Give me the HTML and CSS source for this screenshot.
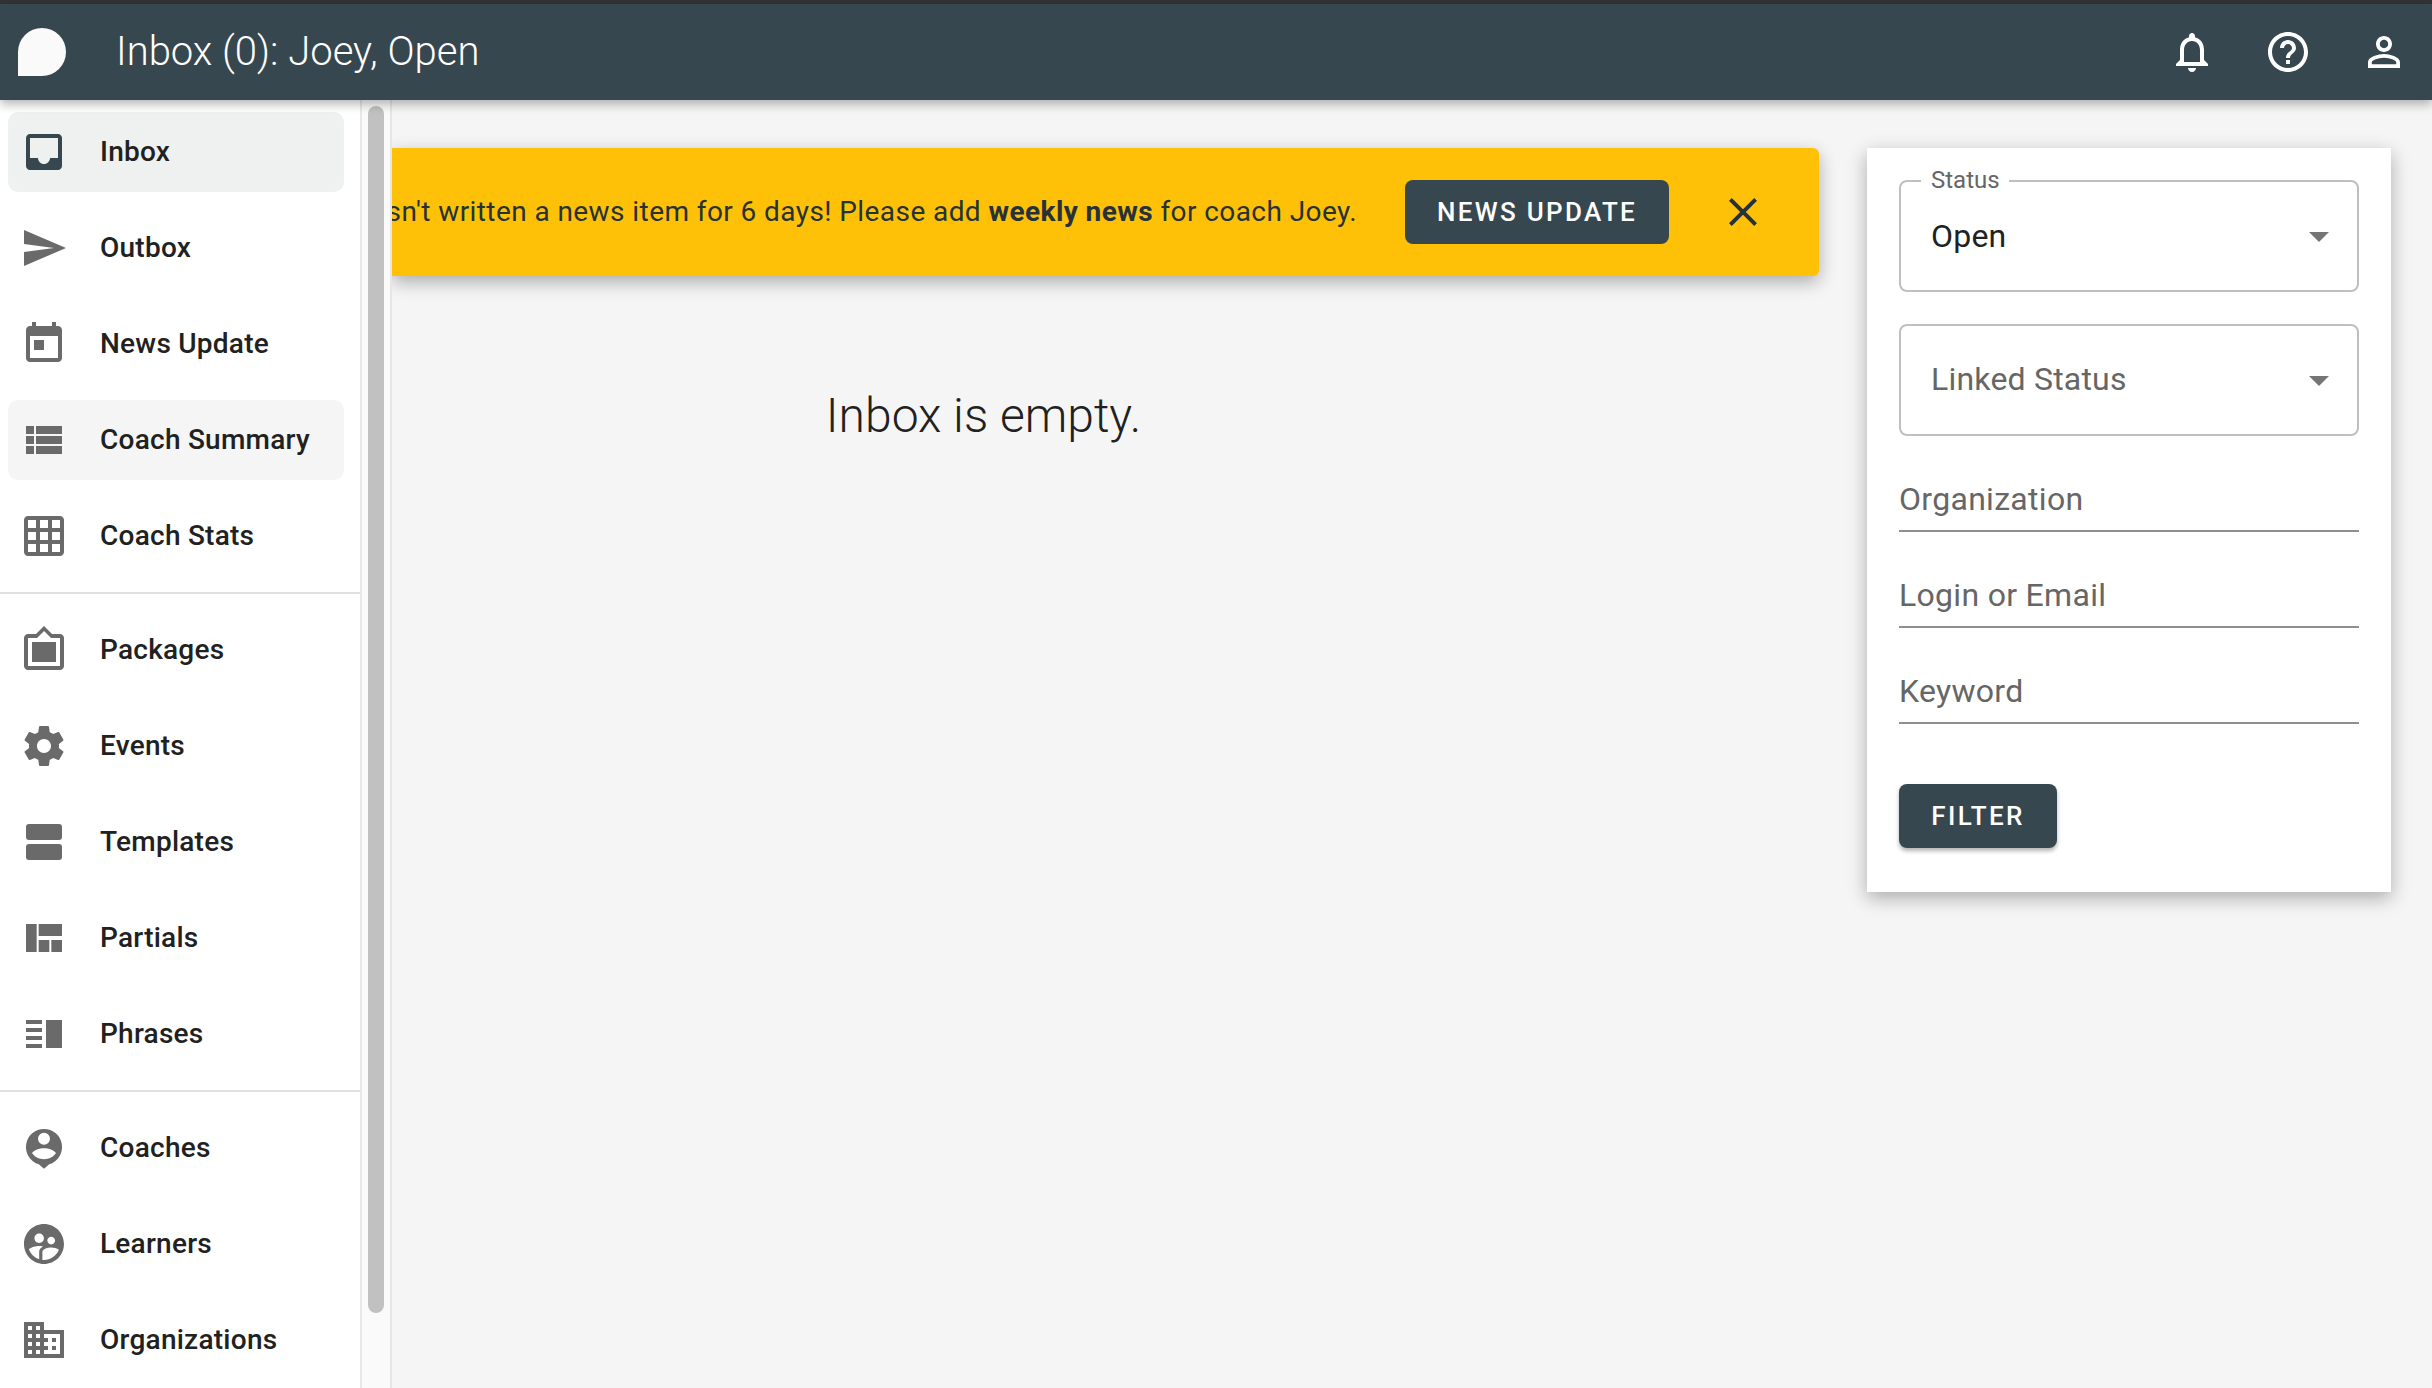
FILE: index.html
```html
<!DOCTYPE html>
<html lang="en">
<head>
<meta charset="utf-8">
<title>Inbox</title>
<link rel="stylesheet" href="styles.css">
</head>
<body>
<div class="strip"></div>
<header class="toolbar">
  <svg class="logo" viewBox="0 0 48 48"><path d="M0 48V24a24 24 0 1 1 24 24z"/></svg>
  <h1 class="title">Inbox (0): Joey, Open</h1>
  <div class="toolbar-actions">
    <svg class="icon" viewBox="0 0 24 24"><path d="M12 22c1.1 0 2-.9 2-2h-4c0 1.1.9 2 2 2zm6-6v-5c0-3.07-1.63-5.64-4.5-6.32V4c0-.83-.67-1.5-1.5-1.5s-1.5.67-1.5 1.5v.68C7.64 5.36 6 7.92 6 11v5l-2 2v1h16v-1l-2-2zm-2 1H8v-6c0-2.48 1.51-4.5 4-4.5s4 2.02 4 4.5v6z"/></svg>
    <svg class="icon" viewBox="0 0 24 24"><path d="M11 18h2v-2h-2v2zm1-16C6.48 2 2 6.48 2 12s4.48 10 10 10 10-4.48 10-10S17.52 2 12 2zm0 18c-4.41 0-8-3.59-8-8s3.59-8 8-8 8 3.59 8 8-3.59 8-8 8zm0-14c-2.21 0-4 1.79-4 4h2c0-1.1.9-2 2-2s2 .9 2 2c0 2-3 1.75-3 5h2c0-2.25 3-2.5 3-5 0-2.21-1.79-4-4-4z"/></svg>
    <svg class="icon" viewBox="0 0 24 24"><path d="M12 5.9c1.16 0 2.1.94 2.1 2.1s-.94 2.1-2.1 2.1S9.9 9.16 9.9 8s.94-2.1 2.1-2.1m0 9c2.97 0 6.1 1.46 6.1 2.1v1.1H5.9V17c0-.64 3.13-2.1 6.1-2.1M12 4C9.79 4 8 5.79 8 8s1.79 4 4 4 4-1.79 4-4-1.79-4-4-4zm0 9c-2.67 0-8 1.34-8 4v3h16v-3c0-2.66-5.33-4-8-4z"/></svg>
  </div>
</header>
<div class="layout">
  <aside class="drawer">
    <nav class="nav">
      <div class="nav-section">
        <a class="nav-item is-active"><svg class="icon" viewBox="0 0 24 24"><path d="M19 3H4.99c-1.11 0-1.98.89-1.98 2L3 19c0 1.1.88 2 1.99 2H19c1.1 0 2-.9 2-2V5c0-1.11-.9-2-2-2zm0 12h-4c0 1.66-1.35 3-3 3s-3-1.34-3-3H4.99V5H19v10z"/></svg><span>Inbox</span></a>
        <a class="nav-item"><svg class="icon" viewBox="0 0 24 24"><path d="M2.01 21L23 12 2.01 3 2 10l15 2-15 2z"/></svg><span>Outbox</span></a>
        <a class="nav-item"><svg class="icon" viewBox="0 0 24 24"><path d="M19 3h-1V1h-2v2H8V1H6v2H5c-1.11 0-1.99.9-1.99 2L3 19c0 1.1.89 2 2 2h14c1.1 0 2-.9 2-2V5c0-1.1-.9-2-2-2zm0 16H5V8h14v11zM7 10h5v5H7z"/></svg><span>News Update</span></a>
        <a class="nav-item is-hover"><svg class="icon" viewBox="0 0 24 24"><path d="M3 14h4v-4H3v4zm0 5h4v-4H3v4zM3 9h4V5H3v4zm5 5h13v-4H8v4zm0 5h13v-4H8v4zM8 5v4h13V5H8z"/></svg><span>Coach Summary</span></a>
        <a class="nav-item"><svg class="icon" viewBox="0 0 24 24"><path d="M20 2H4c-1.1 0-2 .9-2 2v16c0 1.1.9 2 2 2h16c1.1 0 2-.9 2-2V4c0-1.1-.9-2-2-2zM8 20H4v-4h4v4zm0-6H4v-4h4v4zm0-6H4V4h4v4zm6 12h-4v-4h4v4zm0-6h-4v-4h4v4zm0-6h-4V4h4v4zm6 12h-4v-4h4v4zm0-6h-4v-4h4v4zm0-6h-4V4h4v4z"/></svg><span>Coach Stats</span></a>
      </div>
      <div class="nav-section">
        <a class="nav-item"><svg class="icon" viewBox="0 0 24 24"><path d="M20 4h-4l-4-4-4 4H4c-1.1 0-2 .9-2 2v14c0 1.1.9 2 2 2h16c1.1 0 2-.9 2-2V6c0-1.1-.9-2-2-2zm0 16H4V6h4.52l3.52-3.5L15.52 6H20v14zM18 8H6v10h12z"/></svg><span>Packages</span></a>
        <a class="nav-item"><svg class="icon" viewBox="0 0 24 24"><path d="M19.43 12.98c.04-.32.07-.64.07-.98s-.03-.66-.07-.98l2.11-1.65c.19-.15.24-.42.12-.64l-2-3.46c-.12-.22-.39-.3-.61-.22l-2.49 1c-.52-.4-1.08-.73-1.69-.98l-.38-2.65C14.46 2.18 14.25 2 14 2h-4c-.25 0-.46.18-.49.42l-.38 2.65c-.61.25-1.17.59-1.69.98l-2.49-1c-.23-.09-.49 0-.61.22l-2 3.46c-.13.22-.07.49.12.64l2.11 1.65c-.04.32-.07.65-.07.98s.03.66.07.98l-2.11 1.65c-.19.15-.24.42-.12.64l2 3.46c.12.22.39.3.61.22l2.49-1c.52.4 1.08.73 1.69.98l.38 2.65c.03.24.24.42.49.42h4c.25 0 .46-.18.49-.42l.38-2.65c.61-.25 1.17-.59 1.69-.98l2.49 1c.23.09.49 0 .61-.22l2-3.46c.12-.22.07-.49-.12-.64l-2.11-1.65zM12 15.5c-1.93 0-3.5-1.57-3.5-3.5s1.57-3.5 3.5-3.5 3.5 1.57 3.5 3.5-1.57 3.5-3.5 3.5z"/></svg><span>Events</span></a>
        <a class="nav-item"><svg class="icon" viewBox="0 0 24 24"><path d="M4.5 3h15A1.5 1.5 0 0 1 21 4.5v5a1.5 1.5 0 0 1-1.5 1.5h-15A1.5 1.5 0 0 1 3 9.500v-5A1.500 1.500 0 0 1 4.500 3zm0 10h15a1.500 1.500 0 0 1 1.500 1.500v5a1.500 1.500 0 0 1-1.500 1.500h-15A1.500 1.500 0 0 1 3 19.500v-5A1.500 1.500 0 0 1 4.500 13z"/></svg><span>Templates</span></a>
        <a class="nav-item"><svg class="icon" viewBox="0 0 24 24"><path d="M3 19h5.33V5H3v14zm6.33 0h5.33v-6H9.33v6zm6.34 0H21v-6h-5.33v6zM9.33 5v6H21V5H9.33z"/></svg><span>Partials</span></a>
        <a class="nav-item"><svg class="icon" viewBox="0 0 24 24"><path d="M3 15h8v-2H3v2zm0 4h8v-2H3v2zm0-8h8V9H3v2zm0-6v2h8V5H3zm10 0h8v14h-8V5z"/></svg><span>Phrases</span></a>
      </div>
      <div class="nav-section">
        <a class="nav-item"><svg class="icon" viewBox="0 0 24 24"><path fill-rule="evenodd" d="M12 2.500a9 9 0 0 0-2.600 17.620L12 22.400l2.600-2.280A9 9 0 0 0 12 2.500zm0 1.900a3 3 0 1 1 0 6 3 3 0 0 1 0-6zm0 7.700c2.400 0 4.900.9 6 2.400-1.200 1.900-3.500 3.100-6 3.100s-4.800-1.200-6-3.100c1.100-1.500 3.600-2.400 6-2.400z"/></svg><span>Coaches</span></a>
        <a class="nav-item"><svg class="icon" viewBox="0 0 24 24"><path d="M11.990 2c-5.520 0-10 4.480-10 10s4.480 10 10 10 10-4.480 10-10-4.480-10-10-10zm3.610 6.340c1.070 0 1.930.86 1.930 1.930 0 1.070-.86 1.930-1.930 1.930-1.070 0-1.930-.86-1.930-1.930-.01-1.070.86-1.930 1.930-1.930zm-6-1.580c1.300 0 2.360 1.060 2.360 2.360 0 1.300-1.060 2.360-2.360 2.360s-2.360-1.060-2.360-2.360c0-1.310 1.050-2.360 2.360-2.360zm0 9.130v3.750c-2.400-.75-4.300-2.600-5.140-4.960 1.050-1.120 3.670-1.690 5.140-1.690.53 0 1.200.08 1.900.22-1.640.87-1.900 2.020-1.900 2.680zM11.990 20c-.27 0-.53-.01-.79-.04v-4.070c0-1.420 2.940-2.130 4.400-2.130 1.070 0 2.920.39 3.840 1.150-1.170 2.970-4.060 5.090-7.450 5.090z"/></svg><span>Learners</span></a>
        <a class="nav-item"><svg class="icon" viewBox="0 0 24 24"><path d="M12 7V3H2v18h20V7H12zM6 19H4v-2h2v2zm0-4H4v-2h2v2zm0-4H4V9h2v2zm0-4H4V5h2v2zm4 12H8v-2h2v2zm0-4H8v-2h2v2zm0-4H8V9h2v2zm0-4H8V5h2v2zm10 12h-8v-2h2v-2h-2v-2h2v-2h-2V9h8v10zm-2-8h-2v2h2v-2zm0 4h-2v2h2v-2z"/></svg><span>Organizations</span></a>
      </div>
    </nav>
    <div class="scrollbar"><div class="scroll-thumb"></div></div>
  </aside>
  <main class="content">
    <div class="banner">
      <p class="banner-text">Joey hasn't written a news item for 6 days! Please add <strong>weekly news</strong> for coach Joey.</p>
      <button class="btn btn-news">NEWS UPDATE</button>
      <svg class="icon banner-close" viewBox="0 0 24 24"><path d="M19 6.41L17.59 5 12 10.59 6.41 5 5 6.41 10.59 12 5 17.59 6.41 19 12 13.41 17.59 19 19 17.59 13.41 12z"/></svg>
    </div>
    <p class="empty">Inbox is empty.</p>
  </main>
  <aside class="filters">
    <div class="select">
      <span class="select-label">Status</span>
      <span class="select-value">Open</span>
      <svg class="icon select-arrow" viewBox="0 0 24 24"><path d="M7 10l5 5 5-5z"/></svg>
    </div>
    <div class="select">
      <span class="select-value is-placeholder">Linked Status</span>
      <svg class="icon select-arrow" viewBox="0 0 24 24"><path d="M7 10l5 5 5-5z"/></svg>
    </div>
    <div class="field">Organization</div>
    <div class="field">Login or Email</div>
    <div class="field">Keyword</div>
    <button class="btn btn-filter">FILTER</button>
  </aside>
</div>
</body>
</html>
```

FILE: styles.css
```css
* { box-sizing: border-box; }
html, body { height: 100%; }
body {
  margin: 0;
  height: 100vh;
  overflow: hidden;
  display: flex;
  flex-direction: column;
  background: #f5f5f5;
  color: #212121;
  font-family: Roboto, "Liberation Sans", sans-serif;
}
.icon { width: 48px; height: 48px; flex: none; fill: currentColor; display: block; }

.strip { height: 4px; background: #333; flex: none; }
.toolbar {
  height: 96px;
  flex: none;
  display: flex;
  align-items: center;
  padding: 0 24px 0 18px;
  background: #37474f;
  color: #fff;
  position: relative;
  z-index: 3;
  box-shadow: 0 4px 10px rgba(0,0,0,.3);
}
.logo { width: 48px; height: 48px; fill: #fafafa; flex: none; }
.title {
  margin: 0 0 0 50px;
  font-size: 40px;
  font-weight: 300;
  line-height: 48px;
  flex: 1;
}
.toolbar-actions { display: flex; gap: 48px; }

.layout { flex: 1; display: flex; min-height: 0; }

.drawer {
  width: 392px;
  flex: none;
  display: flex;
  background: #fafafa;
  border-right: 2px solid #e6e6e6;
  position: relative;
  z-index: 2;
  overflow: hidden;
}
.nav {
  width: 362px;
  flex: none;
  background: #fff;
  border-right: 2px solid #e8e8e8;
  padding-top: 12px;
}
.nav-section { display: flex; flex-direction: column; gap: 16px; padding-bottom: 16px; border-bottom: 2px solid #e0e0e0; margin-bottom: 16px; }
.nav-section:last-child { border-bottom: 0; margin-bottom: 0; }
.nav-item {
  height: 80px;
  margin: 0 16px 0 8px;
  padding-left: 12px;
  display: flex;
  align-items: center;
  gap: 32px;
  border-radius: 10px;
  font-size: 28px;
  font-weight: 500;
  letter-spacing: .25px;
  color: #212121;
}
.nav-item span { margin-bottom: 2px; }
.nav-item .icon { color: #6a6a6a; }
.nav-item.is-active { background: #eff1f1; }
.nav-item.is-active .icon { color: #37474f; }
.nav-item.is-hover { background: #f5f5f5; }
.scrollbar { flex: 1; padding: 6px 6px 0; }
.scroll-thumb { width: 16px; height: 1207px; border-radius: 8px; background: #c1c1c1; }

.content { flex: 1; min-width: 0; display: flex; flex-direction: column; }
.banner {
  height: 128px;
  margin-top: 48px;
  padding-right: 52px;
  display: flex;
  align-items: center;
  justify-content: flex-end;
  overflow: hidden;
  background: #ffc107;
  color: #263238;
  border-radius: 0 6px 6px 0;
  box-shadow: 0 6px 18px rgba(0,0,0,.3);
}
.banner-text { margin: 0 48px 0 0; flex: none; white-space: nowrap; font-size: 28px; line-height: 40px; letter-spacing: .42px; }
.banner-text strong { font-weight: 700; }
.banner-close { margin-left: 50px; }

.btn {
  height: 64px;
  flex: none;
  border: 0;
  border-radius: 8px;
  padding: 0;
  background: #37474f;
  color: #fff;
  font-family: inherit;
  font-size: 26px;
  font-weight: 500;
  letter-spacing: 2.31px;
}
.btn-news { width: 264px; }
.btn-filter { width: 158px; margin-top: 60px; box-shadow: 0 3px 4px rgba(0,0,0,.3); display: block; }

.empty {
  margin: 112px 244px 0 0;
  text-align: center;
  font-size: 48px;
  font-weight: 300;
  line-height: 56px;
  color: #212121;
}

.filters {
  width: 524px;
  height: 744px;
  flex: none;
  margin: 48px 41px 0 48px;
  padding: 32px;
  background: #fff;
  box-shadow: 0 6px 18px rgba(0,0,0,.3);
}
.select {
  height: 112px;
  margin-bottom: 32px;
  position: relative;
  display: flex;
  align-items: center;
  padding-left: 30px;
  border: 2px solid #bfbfbf;
  border-radius: 8px;
}
.select-label {
  position: absolute;
  left: 20px;
  top: -16px;
  padding: 0 9px 0 10px;
  background: #fff;
  font-size: 24px;
  line-height: 28px;
  color: #666;
}
.select-value { font-size: 32px; line-height: 40px; color: #212121; letter-spacing: .2px; }
.select-value.is-placeholder { color: #666; margin-bottom: 2px; }
.select-arrow { margin-left: auto; margin-right: 14px; color: #757575; }

.field {
  height: 64px;
  margin-bottom: 32px;
  display: flex;
  align-items: center;
  border-bottom: 2px solid #8f8f8f;
  font-size: 32px;
  color: #666;
  letter-spacing: .3px;
}
.field:nth-last-of-type(1) { margin-bottom: 0; }
```
